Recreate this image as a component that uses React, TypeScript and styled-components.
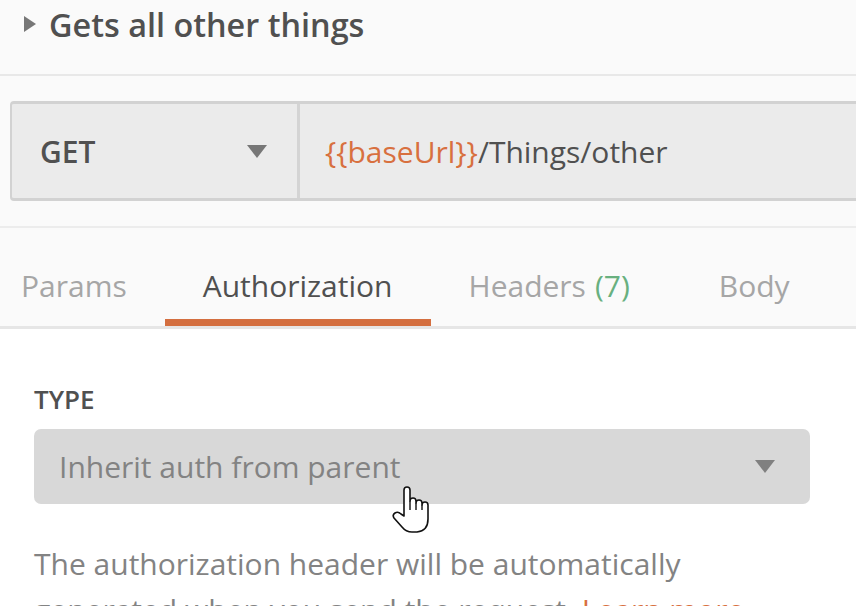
import React from 'react'
import styled, { createGlobalStyle } from 'styled-components';

const GlobalStyle = createGlobalStyle`
	html, body {
		margin: 0;
		padding: 0;
		background: #ffffff;
	}
	body {
		font-family: 'Open Sans', 'Noto Sans', sans-serif;
		color: #505050;
	}
`;

const Page = styled.div`
	position: relative;
	width: 856px;
	height: 606px;
	overflow: hidden;
	background: #ffffff;
`;

const Header = styled.div`
	display: flex;
	align-items: center;
	gap: 13px;
	height: 76px;
	box-sizing: border-box;
	padding: 2px 0 28px 24px;
	background: #fafafa;
	border-bottom: 2px solid #e8e8e8;
`;

const Caret = styled.span<{ $dir?: 'right' | 'down'; $color?: string }>`
	display: inline-block;
	width: 0;
	height: 0;
	flex-shrink: 0;
	${({ $dir = 'down', $color = '#777' }) => $dir === 'right'
		? `border-top: 8.5px solid transparent; border-bottom: 8.5px solid transparent; border-left: 12px solid ${$color};`
		: `border-left: 10px solid transparent; border-right: 10px solid transparent; border-top: 13px solid ${$color};`}
`;

const Title = styled.h1`
	margin: 0;
	font-size: 32.4px;
	line-height: 44px;
	font-weight: 600;
	color: #505050;
`;

const UrlSection = styled.div`
	height: 152px;
	box-sizing: border-box;
	padding: 25px 0 0 10px;
	background: #fafafa;
	border-bottom: 2px solid #ececec;
`;

const UrlBar = styled.div`
	display: flex;
	width: 900px;
	height: 100px;
	box-sizing: border-box;
	background: #ebebeb;
	border: 3px solid #d2d2d2;
	border-left-width: 2px;
	border-radius: 4px;
`;

const MethodSelect = styled.div`
	display: flex;
	align-items: center;
	justify-content: space-between;
	width: 288px;
	box-sizing: border-box;
	padding: 0 30px 0 28px;
	border-right: 3px solid #d4d4d4;
	font-size: 30px;
	font-weight: 600;
	color: #505050;
`;

const UrlInput = styled.div`
	display: flex;
	align-items: center;
	flex: 1;
	padding-left: 25px;
	font-size: 30px;
	color: #505050;
`;

const Variable = styled.span`
	color: #d8703f;
`;

const TabList = styled.div`
	display: flex;
	margin-left: -17px;
	background: #fafafa;
	border-bottom: 3px solid #e6e6e6;
`;

const Tab = styled.div<{ $active?: boolean }>`
	padding: 37px 38px 13px;
	font-size: 30px;
	line-height: 41px;
	white-space: nowrap;
	color: ${({ $active }) => ($active ? '#505050' : '#a6a6a6')};
	border-bottom: 7px solid ${({ $active }) => ($active ? '#d46f40' : 'transparent')};
`;

const Count = styled.span`
	margin: 0 13px 0 9px;
	color: #68b07f;
`;

const Content = styled.div`
	padding: 52px 0 0 34px;
`;

const FieldLabel = styled.div`
	font-size: 26px;
	line-height: 36px;
	font-weight: 600;
	color: #505050;
`;

const Select = styled.div`
	display: flex;
	align-items: center;
	justify-content: space-between;
	width: 776px;
	height: 75px;
	margin-top: 12px;
	box-sizing: border-box;
	padding: 0 35px 0 25px;
	background: #d8d8d8;
	border-radius: 7px;
	font-size: 30px;
	line-height: 41px;
	color: #838383;
`;

const Description = styled.p`
	width: 776px;
	margin: 37px 0 0;
	font-size: 30px;
	line-height: 46px;
	color: #838383;
`;

const Link = styled.a`
	color: #d8703f;
	text-decoration: none;
`;

const Pointer = styled.svg`
	position: absolute;
	left: 391px;
	top: 485px;
	pointer-events: none;
`;

const HandCursor = () => (
	<Pointer width="40" height="50" viewBox="0 0 40 50">
		<path
			d="M13 31 L13 5 Q13 2 16 2 Q19 2 19 5 L19 16 Q19 13 22 13 Q25 13 25 16 L25 18 Q25 15 28 15 Q31 15 31 18 L31 20 Q31 17 34 17 Q37 17 37 20 L37 34 Q37 46 26 47 L21 47 Q15 47 11 42 L3 33 Q1 30 4 28 Q7 26 10 29 L13 31 Z"
			fill="#ffffff"
			stroke="#111111"
			strokeWidth="1.6"
			strokeLinejoin="round"
		/>
		<path d="M19 16 L19 25 M25 18 L25 25 M31 20 L31 25" stroke="#111111" strokeWidth="1.4" fill="none" />
	</Pointer>
);

export default function App() {
	return (
		<Page>
			<GlobalStyle />
			<Header>
				<Caret $dir="right" />
				<Title>Gets all other things</Title>
			</Header>
			<UrlSection>
				<UrlBar>
					<MethodSelect>
						GET
						<Caret />
					</MethodSelect>
					<UrlInput>
						<Variable>{'{{baseUrl}}'}</Variable>/Things/other
					</UrlInput>
				</UrlBar>
			</UrlSection>
			<TabList>
				<Tab>Params</Tab>
				<Tab $active>Authorization</Tab>
				<Tab>Headers<Count>(7)</Count></Tab>
				<Tab>Body</Tab>
			</TabList>
			<Content>
				<FieldLabel>TYPE</FieldLabel>
				<Select>
					Inherit auth from parent
					<Caret $color="#808080" />
				</Select>
				<Description>
					The authorization header will be automatically generated when you send the request. <Link>Learn more</Link>
				</Description>
			</Content>
			<HandCursor />
		</Page>
	);
}
